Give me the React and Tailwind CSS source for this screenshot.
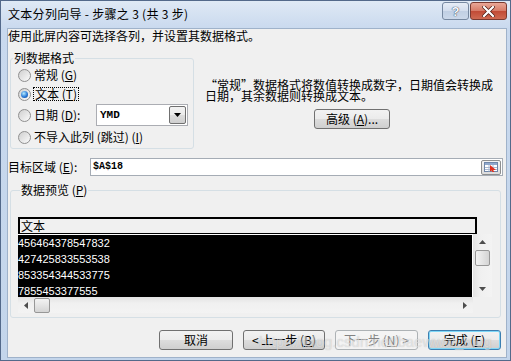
import React from 'react';

const cjk = "font-['Noto_Sans_CJK_SC',sans-serif]";

// mnemonic letter
const U = ({ children }) => <span className="underline underline-offset-[1px]">{children}</span>;

function Radio({ checked }) {
  return (
    <span className="flex h-[13px] w-[13px] shrink-0 items-center justify-center rounded-full border border-[#8f8f8f] bg-gradient-to-br from-[#cfcfcf] to-[#fbfbfb]">
      {checked && (
        <span className="h-[7px] w-[7px] rounded-full bg-[radial-gradient(circle_at_40%_35%,#b6ecff,#2a7ad8_55%,#0d3f8a)]" />
      )}
    </span>
  );
}

function Btn({ children, className = '', disabled, focused }) {
  let look = 'border-[#707070] bg-[linear-gradient(#f2f2f2,#ebebeb_50%,#dddddd_50%,#cfcfcf)] text-black';
  if (disabled) look = 'border-[#adb2b5] bg-[#f4f4f4] text-[#838383]';
  if (focused) look = 'border-[#3c7fb1] bg-[linear-gradient(#f2f2f2,#ebebeb_50%,#dddddd_50%,#cfcfcf)] text-black shadow-[inset_0_0_0_1px_#7fd7f7]';
  return (
    <div className={`flex h-[20px] shrink-0 items-center justify-center rounded-[3px] border text-[12px] leading-[14px] ${look} ${className}`}>
      {children}
    </div>
  );
}

function Arrow({ dir }) {
  const pts = {
    up: '0,4 7,4 3.5,0',
    down: '0,0 7,0 3.5,4',
    left: '4,0 4,7 0,3.5',
    right: '0,0 0,7 4,3.5',
  }[dir];
  const vert = dir === 'up' || dir === 'down';
  return (
    <svg width={vert ? 7 : 4} height={vert ? 4 : 7}>
      <polygon points={pts} fill="#4d4d4d" />
    </svg>
  );
}

const rows = ['456464378547832', '427425833553538', '853354344533775', '7855453377555'];

export default function App() {
  return (
    <div className={`relative flex h-[361px] w-[511px] flex-col border border-[#53698a] bg-[linear-gradient(#dfe9f5,#c9d9ee_28px,#c3d5eb)] pb-[2px] pl-[6px] pr-[3px] text-black ${cjk}`}>
      {/* title bar */}
      <div className="flex h-[27px] shrink-0 items-start justify-between">
        <span className="mt-[5px] pl-[1px] text-[12px] leading-[16px] tracking-[0.3px]">文本分列向导 - 步骤之 3 (共 3 步)</span>
        <div className="mt-[1px] flex gap-[1px]">
          <div className="flex h-[18px] w-[27px] items-center justify-center rounded-[3px] border border-[#7688a0] bg-[linear-gradient(#e6edf6,#d2dded_50%,#c0cfe3_50%,#cbd8ea)]">
            <span className="font-['Liberation_Sans',sans-serif] text-[13px] font-bold leading-none text-[#f7f9fc] [text-shadow:0_0_1px_#2c3e58,0_0_1px_#2c3e58]">?</span>
          </div>
          <div className="flex h-[18px] w-[37px] items-center justify-center rounded-[3px] border border-[#7a3a30] bg-[linear-gradient(#e9a797,#d67a66_50%,#c14a35_50%,#cf6a52)]">
            <svg width="13" height="11" viewBox="0 0 13 11">
              <path d="M2 1 L11 10 M11 1 L2 10" stroke="#4b1a12" strokeWidth="3.6" strokeLinecap="square" />
              <path d="M2 1 L11 10 M11 1 L2 10" stroke="#ffffff" strokeWidth="2.2" strokeLinecap="square" />
            </svg>
          </div>
        </div>
      </div>

      {/* client area */}
      <div className="flex flex-1 flex-col border border-[#9fb2ca] bg-[#f0f0f0] text-[12px]">
        <div className="h-[14px] leading-[14px]">使用此屏内容可选择各列，并设置其数据格式。</div>

        <div className="mt-[7px] flex">
          <fieldset className="ml-[2px] w-[184px] rounded-[3px] border border-[#d5dfe5]">
            <legend className="ml-[2px] px-[1px] leading-[16px]">列数据格式</legend>
            <div className="flex h-[18px] items-center gap-[3px] pl-[7px]">
              <Radio />
              <span className="leading-[14px]">常规 (<U>G</U>)</span>
            </div>
            <div className="flex h-[20px] items-center gap-[2px] pl-[7px]">
              <Radio checked />
              <span className="border border-dotted border-black px-[1px] leading-[12px]">文本 (<U>T</U>)</span>
            </div>
            <div className="flex h-[22px] items-center gap-[3px] pl-[7px]">
              <Radio />
              <span className="w-[59px] leading-[14px]">日期 (<U>D</U>):</span>
              <div className="flex h-[22px] w-[92px] items-center border border-[#abadb3] bg-white">
                <span className="flex-1 pl-[3px] font-['Liberation_Mono',monospace] text-[11px] font-bold leading-none">YMD</span>
                <span className="mr-[1px] flex h-[18px] w-[17px] items-center justify-center rounded-[2px] border border-[#707070] bg-[linear-gradient(#f2f2f2,#ebebeb_50%,#dddddd_50%,#cfcfcf)]">
                  <svg width="7" height="4"><polygon points="0,0 7,0 3.5,4" fill="#000" /></svg>
                </span>
              </div>
            </div>
            <div className="flex h-[22px] items-center gap-[3px] pl-[7px]">
              <Radio />
              <span className="leading-[14px]">不导入此列 (跳过) (<U>I</U>)</span>
            </div>
          </fieldset>

          <div className="ml-[11px] flex flex-col pt-[29px]">
            <p className="whitespace-nowrap leading-[11px]">
              “常规”数据格式将数值转换成数字，日期值会转换成
              <br />
              日期，其余数据则转换成文本。
            </p>
            <Btn className="ml-[109px] mt-[8px] w-[76px]">高级 (<U>A</U>)...</Btn>
          </div>
        </div>

        <div className="mt-[9px] flex h-[18px] items-center">
          <span className="w-[82px] leading-[14px]">目标区域 (<U>E</U>):</span>
          <div className="flex h-[18px] w-[413px] items-center border border-[#a5acb5] bg-white">
            <span className="flex-1 pl-[2px] font-['Liberation_Mono',monospace] text-[10px] font-bold leading-none">$A$18</span>
            <span className="mr-[1px] flex h-[15px] w-[20px] items-center justify-center rounded-[2px] border border-[#8e8f8f] bg-[linear-gradient(#f4f4f4,#dcdcdc)]">
              <svg width="14" height="10" viewBox="0 0 14 10">
                <rect x="0.5" y="0.5" width="13" height="9" fill="#ffffff" stroke="#6f86a8" />
                <rect x="1" y="1" width="12" height="2" fill="#8fa8cc" />
                <path d="M1 5.5 H13 M1 7.5 H13 M5 3 V9.5 M9 3 V9.5" stroke="#a9b9d1" strokeWidth="1" />
                <path d="M6 3 L12 8 L9 8 L10.5 10 L8.5 10 L7.5 8.5 L6 9.5 Z" fill="#e0301e" />
              </svg>
            </span>
          </div>
        </div>

        <fieldset className="ml-[2px] mt-[6px] w-[491px] rounded-[3px] border border-[#d5dfe5] pb-[4px] pl-[7px]">
          <legend className="ml-[2px] px-[1px] leading-[16px]">数据预览 (<U>P</U>)</legend>
          <div className="mt-[19px] flex flex-col">
            <div className="h-[17px] w-[459px] border-x-2 border-b border-t-2 border-black bg-[#f0f0f0] pl-[1px] leading-[13px]">文本</div>
            <div className="flex">
              <div className="h-[63px] w-[455px] border-r border-t border-white bg-black font-['Liberation_Sans',sans-serif] text-[11px] leading-[16px] text-white">
                {rows.map((r) => (
                  <div key={r} className="h-[16px]">{r}</div>
                ))}
              </div>
              <div className="flex h-[63px] w-[19px] flex-col items-center bg-[linear-gradient(90deg,#e3e3e3,#f0f0f0_40%,#f3f3f3)]">
                <div className="flex h-[16px] items-center"><Arrow dir="up" /></div>
                <div className="h-[16px] w-[15px] rounded-[2px] border border-[#979797] bg-[linear-gradient(90deg,#f3f3f3,#e4e4e4_50%,#d4d4d4)]" />
                <div className="flex-1" />
                <div className="flex h-[16px] items-center"><Arrow dir="down" /></div>
              </div>
            </div>
            <div className="flex h-[16px] w-[455px] items-center bg-[linear-gradient(#e3e3e3,#f0f0f0_40%,#f3f3f3)]">
              <div className="flex w-[16px] justify-center"><Arrow dir="left" /></div>
              <div className="h-[15px] w-[16px] rounded-[2px] border border-[#979797] bg-[linear-gradient(#f3f3f3,#e4e4e4_50%,#d4d4d4)]" />
              <div className="flex-1" />
              <div className="flex w-[16px] justify-center"><Arrow dir="right" /></div>
            </div>
          </div>
        </fieldset>

        <div className="mt-[12px] flex justify-end gap-[10px] pr-[5px]">
          <Btn className="w-[74px]">取消</Btn>
          <Btn className="w-[82px]">&lt; 上一步 (<U>B</U>)</Btn>
          <Btn className="w-[83px]" disabled>下一步 (<U>N</U>) &gt;</Btn>
          <Btn className="w-[73px]" focused>完成 (<U>F</U>)</Btn>
        </div>
      </div>

      {/* watermark */}
      <span className="pointer-events-none absolute left-[258px] top-[332px] font-['Liberation_Sans',sans-serif] text-[15px] leading-[18px] text-white/50 [text-shadow:0_0_1px_rgba(90,90,90,0.35)]">
        https://blog.csdn.net/baewww_blog
      </span>
    </div>
  );
}
